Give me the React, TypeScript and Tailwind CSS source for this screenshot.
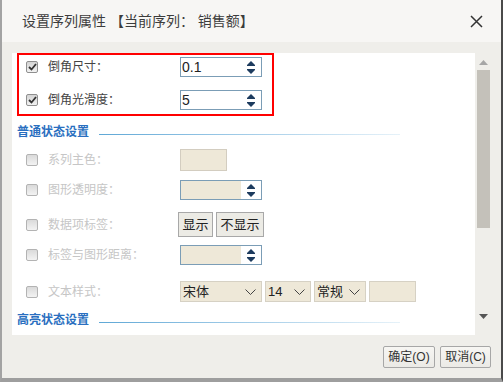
import type { ReactNode } from 'react';

function Check({ checked, disabled }: { checked?: boolean; disabled?: boolean }) {
  return (
    <span
      className={`flex h-[12px] w-[12px] shrink-0 items-center justify-center rounded-[2px] border bg-gradient-to-b ${
        disabled ? 'border-[#b3b3b3] from-[#dadada] to-[#f3f3f3]' : 'border-[#8f8f8f] from-[#d4d4d4] to-[#f2f2f2]'
      }`}
    >
      {checked && (
        <svg width="9" height="8" viewBox="0 0 9 8">
          <path d="M1 4 L3.5 6.5 L8 1" fill="none" stroke="#333" strokeWidth="1.8" />
        </svg>
      )}
    </span>
  );
}

function Arrows() {
  return (
    <div className="flex w-[20px] flex-col items-center justify-center gap-[3px] bg-white">
      <svg width="8" height="5" viewBox="0 0 8 5">
        <polygon points="0,4 4,0 8,4" fill="#1d3b5e" />
        <rect x="0" y="4" width="8" height="1" fill="#1d3b5e" />
      </svg>
      <svg width="8" height="5" viewBox="0 0 8 5">
        <rect x="0" y="0" width="8" height="1" fill="#1d3b5e" />
        <polygon points="0,1 8,1 4,5" fill="#1d3b5e" />
      </svg>
    </div>
  );
}

function Spin({ value, disabled }: { value?: string; disabled?: boolean }) {
  return (
    <div className="flex h-[20px] w-[82px] border border-[#7b9db6]">
      <div
        className={`flex flex-1 items-center pl-[1px] text-[14px] leading-none text-[#222] ${
          disabled ? 'bg-[#eee8d8]' : 'bg-white'
        }`}
      >
        {value}
      </div>
      <Arrows />
    </div>
  );
}

function Select({ text, w }: { text: string; w: string }) {
  return (
    <div
      className={`flex h-[21px] items-center justify-between border border-[#d6d1c4] bg-[#eee8d8] pl-[2px] pr-[5px] text-[13px] text-[#222] ${w}`}
    >
      <span>{text}</span>
      <svg width="11" height="6" viewBox="0 0 11 6">
        <path d="M0.5 0.5 L5.5 5.5 L10.5 0.5" fill="none" stroke="#444" strokeWidth="1" />
      </svg>
    </div>
  );
}

function Row({
  label,
  checked,
  disabled,
  inBox,
  className,
  children,
}: {
  label: string;
  checked?: boolean;
  disabled?: boolean;
  inBox?: boolean;
  className?: string;
  children: ReactNode;
}) {
  return (
    <div className={`flex items-center ${inBox ? 'pl-[7px]' : 'pl-[14px]'} ${className ?? ''}`}>
      <Check checked={checked} disabled={disabled} />
      <span className={`ml-[10px] w-[132px] text-[12px] ${disabled ? 'text-[#c6c6c6]' : 'text-[#444]'}`}>
        {label}
      </span>
      {children}
    </div>
  );
}

function Heading({ text, className }: { text: string; className?: string }) {
  return (
    <div className={`flex h-[20px] items-center pl-[5px] ${className ?? ''}`}>
      <span className="text-[12px] font-bold text-[#2a6fc0]">{text}</span>
      <div className="ml-[10px] mt-[4px] h-[1px] w-[301px] bg-gradient-to-r from-[#5fa8d6] to-[#e6f2f9]" />
    </div>
  );
}

function FooterButton({ text, w }: { text: string; w: string }) {
  return (
    <button
      className={`flex h-[22px] items-center justify-center rounded-[2px] border border-[#a7a7a7] bg-gradient-to-b from-[#f7f6f3] to-[#ebeae6] text-[12px] text-[#333] ${w}`}
    >
      {text}
    </button>
  );
}

export default function App() {
  return (
    <div className="flex h-[382px] w-[503px] flex-col border-b-4 border-l-2 border-r-2 border-b-[#9e9e9e] border-l-[#a3a3a3] border-r-[#4a4a4a] bg-[#efeeea] font-['Liberation_Sans','Noto_Sans_CJK_SC',sans-serif]">
      {/* Title bar */}
      <div className="flex h-[42px] shrink-0 items-center justify-between bg-[#f7f6f4] pl-[20px] pr-[18px]">
        <span className="text-[14px] text-[#3c3c3c]">设置序列属性 【当前序列： 销售额】</span>
        <svg width="13" height="13" viewBox="0 0 13 13">
          <path d="M1 1 L12 12 M12 1 L1 12" stroke="#333" strokeWidth="1.5" />
        </svg>
      </div>

      {/* Body */}
      <div className="flex h-[293px] shrink-0 pl-[10px] pr-[9px] pt-[11px]">
        <div className="flex h-[282px] w-[463px] flex-col overflow-hidden bg-white">
          {/* Bevel settings */}
          <div className="ml-[5px] flex h-[63px] w-[257px] shrink-0 flex-col gap-[11px] border-2 border-[#f00] pt-[1px]">
            <Row inBox checked label="倒角尺寸：" className="h-[22px]">
              <Spin value="0.1" />
            </Row>
            <Row inBox checked label="倒角光滑度：" className="h-[22px]">
              <Spin value="5" />
            </Row>
          </div>

          <Heading text="普通状态设置" className="mt-[6px]" />

          <Row disabled label="系列主色：" className="mt-[7px] h-[22px]">
            <div className="h-[22px] w-[47px] border border-[#d3cdc0] bg-[#eee8d8]" />
          </Row>

          <Row disabled label="图形透明度：" className="mt-[9px] h-[20px]">
            <Spin disabled />
          </Row>

          <Row disabled label="数据项标签：" className="mt-[12px] h-[25px]">
            <div className="-ml-[2px] flex gap-[3px]">
              <button className="h-[25px] w-[35px] border border-[#a8a8a8] bg-[#ecebe5] text-[13px] text-[#222]">
                显示
              </button>
              <button className="h-[25px] w-[48px] border border-[#a8a8a8] bg-[#ecebe5] text-[13px] text-[#222]">
                不显示
              </button>
            </div>
          </Row>

          <Row disabled label="标签与图形距离：" className="mt-[8px] h-[20px]">
            <Spin disabled />
          </Row>

          <Row disabled label="文本样式：" className="mt-[16px] h-[21px]">
            <div className="flex gap-[3px]">
              <Select text="宋体" w="w-[82px]" />
              <Select text="14" w="w-[46px]" />
              <Select text="常规" w="w-[52px]" />
              <div className="h-[21px] w-[47px] border border-[#d6d1c4] bg-[#eee8d8]" />
            </div>
          </Row>

          <Heading text="高亮状态设置" className="mt-[8px]" />
        </div>

        {/* Scrollbar */}
        <div className="flex w-[17px] flex-col items-center pt-[7px]">
          <svg width="9" height="5" viewBox="0 0 9 5">
            <polygon points="0,5 4.5,0 9,5" fill="#a6a6a6" />
          </svg>
          <div className="mt-[5px] h-[158px] w-[13px] bg-[#c4c1ba]" />
          <svg className="mt-[86px]" width="9" height="5" viewBox="0 0 9 5">
            <polygon points="0,0 9,0 4.5,5" fill="#555" />
          </svg>
        </div>
      </div>

      {/* Footer */}
      <div className="flex flex-1 items-start justify-end gap-[5px] pr-[10px] pt-[11px]">
        <FooterButton text="确定(O)" w="w-[52px]" />
        <FooterButton text="取消(C)" w="w-[51px]" />
      </div>
    </div>
  );
}
